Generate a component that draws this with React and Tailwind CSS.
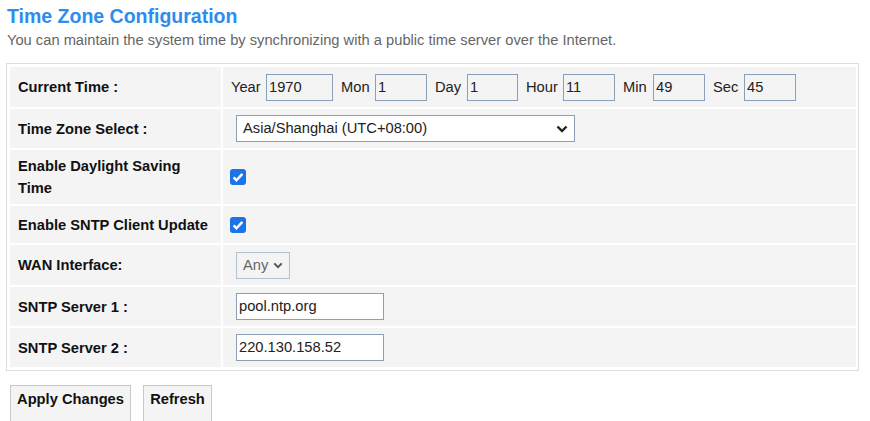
// Time zone configuration page of a router admin UI
const font = { fontFamily: '"Liberation Sans", Arial, sans-serif' }

// Small chevron used inside the select boxes
function Chevron({ className = '' }) {
  return (
    <svg viewBox="0 0 12 8" className={className} fill="none" stroke="currentColor" strokeWidth="2.4">
      <path d="M1.5 1.5l4.5 4.5 4.5-4.5" />
    </svg>
  )
}

// Checked checkbox drawn by hand so size and colour match
function Checked() {
  return (
    <span className="ml-[7px] w-4 h-4 rounded-[3px] bg-[#1a73e8] flex items-center justify-center">
      <svg viewBox="0 0 16 16" className="w-[14px] h-[14px]" fill="none" stroke="white" strokeWidth="2.8">
        <path d="M3 8.5l3.2 3.2L13 4.5" />
      </svg>
    </span>
  )
}

// One field of the "Current Time" row: label + read-only box
function TimeField({ label, value, width, labelWidth, first }) {
  return (
    <div className={`flex items-center ${first ? '' : 'ml-[8px]'}`}>
      <span className={labelWidth}>{label}</span>
      <div className={`${width} h-[27px] border border-[#8aa0b8] bg-[#f4f4f4] pl-[2px] flex items-center`}>
        {value}
      </div>
    </div>
  )
}

function Label({ children }) {
  return (
    <div className="bg-[#f4f4f4] flex items-center pl-[8px] pr-[8px] font-bold text-[14.7px] leading-[22px] text-[#111]">
      {children}
    </div>
  )
}

function Value({ children, className = '' }) {
  return <div className={`bg-[#f4f4f4] flex items-center ${className}`}>{children}</div>
}

export default function App() {
  const fields = [
    { label: 'Year', value: '1970', width: 'w-[67px]', labelWidth: 'w-[35px]' },
    { label: 'Mon', value: '1', width: 'w-[52px]', labelWidth: 'w-[34px]' },
    { label: 'Day', value: '1', width: 'w-[51px]', labelWidth: 'w-[32px]' },
    { label: 'Hour', value: '11', width: 'w-[52px]', labelWidth: 'w-[37px]' },
    { label: 'Min', value: '49', width: 'w-[52px]', labelWidth: 'w-[30px]' },
    { label: 'Sec', value: '45', width: 'w-[52px]', labelWidth: 'w-[31px]' },
  ]

  return (
    <div style={font} className="w-[870px] h-[421px] overflow-hidden bg-white pl-[6px] pt-[4px] text-[14.7px] text-[#222]">
      <h1 className="pl-[1px] text-[19.5px] leading-[24px] font-bold text-[#2d8cf0]">Time Zone Configuration</h1>
      <p className="pl-[1px] mt-[2px] text-[14.7px] leading-[20px] text-[#666]">
        You can maintain the system time by synchronizing with a public time server over the Internet.
      </p>

      {/* main settings table */}
      <div className="mt-[13px] w-[853px] border border-[#dddddd] pt-[3px] pb-[3px] pl-[3px] pr-[2px]">
        <div className="grid grid-cols-[211px_1fr] grid-rows-[40px_39px_54px_37px_40px_39px_39px] gap-[2px]">
          <Label>Current Time :</Label>
          <Value className="pl-[8px]">
            {fields.map((f, i) => (
              <TimeField key={f.label} {...f} first={i === 0} />
            ))}
          </Value>

          <Label>Time Zone Select :</Label>
          <Value className="pl-[13px]">
            <div className="w-[339px] h-[27px] border border-[#8aa0b8] bg-white flex items-center justify-between pl-[6px] pr-[6px]">
              <span>Asia/Shanghai (UTC+08:00)</span>
              <Chevron className="w-[12px] h-[8px] text-[#222]" />
            </div>
          </Value>

          <Label>Enable Daylight Saving Time</Label>
          <Value>
            <Checked />
          </Value>

          <Label>Enable SNTP Client Update</Label>
          <Value>
            <Checked />
          </Value>

          <Label>WAN Interface:</Label>
          <Value className="pl-[13px]">
            <div className="w-[54px] h-[27px] border border-[#b4c2d0] flex items-center pl-[6px] text-[#666]">
              <span>Any</span>
              <Chevron className="ml-[5px] w-[10px] h-[7px] text-[#555]" />
            </div>
          </Value>

          <Label>SNTP Server 1 :</Label>
          <Value className="pl-[13px]">
            <div className="w-[148px] h-[27px] border border-[#8aa0b8] bg-white flex items-center pl-[2px]">pool.ntp.org</div>
          </Value>

          <Label>SNTP Server 2 :</Label>
          <Value className="pl-[13px]">
            <div className="w-[148px] h-[27px] border border-[#8aa0b8] bg-white flex items-center pl-[2px]">220.130.158.52</div>
          </Value>
        </div>
      </div>

      {/* action buttons */}
      <div className="mt-[14px] ml-[4px] flex gap-[12px]">
        <button className="w-[121px] h-[40px] border border-[#c8c8c8] bg-[#f4f4f4] font-bold text-[14.7px] text-[#111] pb-[12px]">
          Apply Changes
        </button>
        <button className="w-[69px] h-[40px] border border-[#c8c8c8] bg-[#f4f4f4] font-bold text-[14.7px] text-[#111] pb-[12px]">
          Refresh
        </button>
      </div>
    </div>
  )
}
